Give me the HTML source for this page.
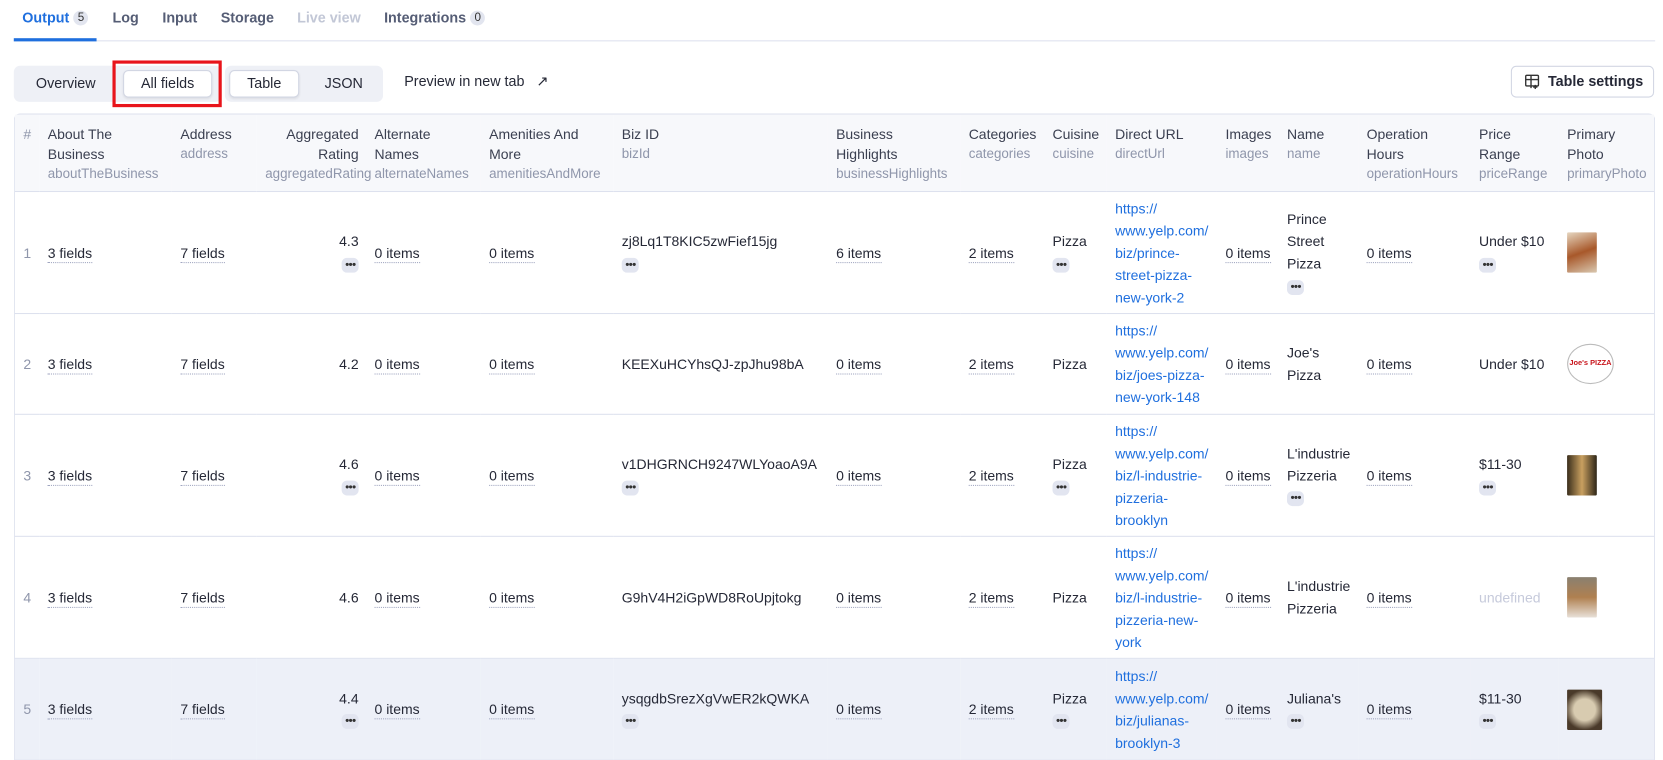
<!DOCTYPE html>
<html><head><meta charset="utf-8"><style>
*{box-sizing:border-box;margin:0;padding:0}
html,body{width:1663px;height:760px;overflow:hidden;background:#fff}
body{font-family:"Liberation Sans",Arial,sans-serif;font-size:13.2px;color:#252836;position:relative}
#w{position:absolute;left:0;top:0;width:1563px;height:715px;transform:scale(1.061);transform-origin:0 0}
.tabs{position:absolute;left:13px;top:0;width:1547px;height:39px;border-bottom:1px solid #dde1ee}
.tab{position:absolute;top:9px;font-size:13.5px;font-weight:bold;color:#555d75}
.badge{display:inline-block;background:#e2e5ef;border-radius:8px;font-size:11px;font-weight:normal;padding:1px 4px;margin-left:4px;color:#333;vertical-align:1px}
.seg{position:absolute;top:62px;height:34px;background:#eef0f6;border-radius:6px}
.btn{position:absolute;top:4px;height:26px;line-height:26px;text-align:center;font-size:13.5px;color:#252836}
.btn.on{background:#fff;border:1px solid #d2d6e3;border-radius:5px;line-height:24px;box-shadow:0 1px 2px rgba(0,0,0,.08)}
table{position:absolute;left:13px;top:107px;width:1547px;border-collapse:separate;border-spacing:0;table-layout:fixed;border:1px solid #dde1ee;border-radius:6px 6px 0 0;border-bottom:none}
th{background:#f7f8fb;text-align:left;vertical-align:top;font-weight:normal;padding:9px 8px 0;line-height:19px;height:73px;border-bottom:1px solid #dde1ee;color:#3a3f50;white-space:nowrap}
th small{display:block;font-size:12.6px;color:#8f96ab}
td{vertical-align:middle;padding:0 8px;line-height:21px;border-bottom:1px solid #dde1ee;white-space:nowrap}
.u{border-bottom:1px dotted #a0a6c0;padding-bottom:1px}
.n{color:#8f96ab;padding-left:8px}
.r{text-align:right;padding-right:7px}
.d{display:inline-block;width:16px;height:14px;border-radius:5px;background:#e2e5f0;font-size:7px;line-height:14px;text-align:center;color:#333;vertical-align:middle;letter-spacing:-1px}
a{color:#1f6fde;text-decoration:none}
.img{width:28px;height:38px;border-radius:1px}
tr.h td{background:#edf0f8}
</style></head><body><div id="w">
<div class="tabs">
<div class="tab" style="left:8px;color:#1f6fde">Output<span class="badge">5</span></div>
<div style="position:absolute;left:0;top:36px;width:78px;height:3px;background:#1f6fde"></div>
<div class="tab" style="left:93px">Log</div>
<div class="tab" style="left:140px">Input</div>
<div class="tab" style="left:195px">Storage</div>
<div class="tab" style="left:267px;color:#c2c7d6">Live view</div>
<div class="tab" style="left:349px">Integrations<span class="badge">0</span></div>
</div>
<div class="seg" style="left:13px;width:196px">
<div class="btn" style="left:8px;width:82px">Overview</div>
<div class="btn on" style="left:103px;width:84px">All fields</div>
</div>
<div style="position:absolute;left:106px;top:57px;width:103px;height:44px;border:3px solid #e8141b"></div>
<div class="seg" style="left:212px;width:149px">
<div class="btn on" style="left:4px;width:66px">Table</div>
<div class="btn" style="left:84px;width:56px">JSON</div>
</div>
<div style="position:absolute;left:381px;top:69px;font-size:13.5px">Preview in new tab&nbsp;&nbsp;&nbsp;↗</div>
<div style="position:absolute;left:1424px;top:62px;width:135px;height:30px;border:1px solid #d2d6e3;border-radius:5px;background:#fff;font-weight:bold;font-size:13.5px;line-height:28px;padding-left:34px">
<svg style="position:absolute;left:12px;top:7px" width="14" height="14" viewBox="0 0 14 14" fill="none" stroke="#333" stroke-width="1.3"><rect x="1" y="1" width="12" height="10" rx="1"/><path d="M1 5h12M6 1v12M10 10v4M8 12h4"/></svg>Table settings</div>
<table>
<colgroup><col style="width:23px"><col style="width:125px"><col style="width:80px"><col style="width:103px"><col style="width:108px"><col style="width:125px"><col style="width:202px"><col style="width:125px"><col style="width:79px"><col style="width:59px"><col style="width:104px"><col style="width:58px"><col style="width:75px"><col style="width:106px"><col style="width:83px"><col style="width:90px"></colgroup>
<tr><th style="padding-left:8px;color:#8f96ab">#</th><th>About The<br>Business<small>aboutTheBusiness</small></th><th>Address<small>address</small></th><th class="r">Aggregated<br>Rating<small>aggregatedRating</small></th><th>Alternate<br>Names<small>alternateNames</small></th><th>Amenities And<br>More<small>amenitiesAndMore</small></th><th>Biz ID<small>bizId</small></th><th>Business<br>Highlights<small>businessHighlights</small></th><th>Categories<small>categories</small></th><th>Cuisine<small>cuisine</small></th><th>Direct URL<small>directUrl</small></th><th>Images<small>images</small></th><th>Name<small>name</small></th><th>Operation<br>Hours<small>operationHours</small></th><th>Price<br>Range<small>priceRange</small></th><th>Primary<br>Photo<small>primaryPhoto</small></th></tr>
<tr style="height:115px"><td class="n">1</td><td><span class="u">3 fields</span></td><td><span class="u">7 fields</span></td><td class="r">4.3<br><span class="d">●●●</span></td><td><span class="u">0 items</span></td><td><span class="u">0 items</span></td><td>zj8Lq1T8KIC5zwFief15jg<br><span class="d">●●●</span></td><td><span class="u">6 items</span></td><td><span class="u">2 items</span></td><td>Pizza<br><span class="d">●●●</span></td><td><a>https://<br>www.yelp.com/<br>biz/prince-<br>street-pizza-<br>new-york-2</a></td><td><span class="u">0 items</span></td><td>Prince<br>Street<br>Pizza<br><span class="d">●●●</span></td><td><span class="u">0 items</span></td><td>Under $10<br><span class="d">●●●</span></td><td><div class="img" style="background:linear-gradient(160deg,#e6d6c0,#a8582a 50%,#d9c8b0)"></div></td></tr>
<tr style="height:95px"><td class="n">2</td><td><span class="u">3 fields</span></td><td><span class="u">7 fields</span></td><td class="r">4.2</td><td><span class="u">0 items</span></td><td><span class="u">0 items</span></td><td>KEEXuHCYhsQJ-zpJhu98bA</td><td><span class="u">0 items</span></td><td><span class="u">2 items</span></td><td>Pizza</td><td><a>https://<br>www.yelp.com/<br>biz/joes-pizza-<br>new-york-148</a></td><td><span class="u">0 items</span></td><td>Joe's<br>Pizza</td><td><span class="u">0 items</span></td><td>Under $10</td><td><div style="width:44px;height:38px;border:1px solid #bbb;border-radius:50%;font-size:7px;font-weight:bold;color:#c8141b;text-align:center;line-height:36px;white-space:nowrap;overflow:hidden">Joe's PIZZA</div></td></tr>
<tr style="height:115px"><td class="n">3</td><td><span class="u">3 fields</span></td><td><span class="u">7 fields</span></td><td class="r">4.6<br><span class="d">●●●</span></td><td><span class="u">0 items</span></td><td><span class="u">0 items</span></td><td>v1DHGRNCH9247WLYoaoA9A<br><span class="d">●●●</span></td><td><span class="u">0 items</span></td><td><span class="u">2 items</span></td><td>Pizza<br><span class="d">●●●</span></td><td><a>https://<br>www.yelp.com/<br>biz/l-industrie-<br>pizzeria-<br>brooklyn</a></td><td><span class="u">0 items</span></td><td>L'industrie<br>Pizzeria<br><span class="d">●●●</span></td><td><span class="u">0 items</span></td><td>$11-30<br><span class="d">●●●</span></td><td><div class="img" style="background:linear-gradient(90deg,#3a2e1c,#c9a060 50%,#2e2618)"></div></td></tr>
<tr style="height:115px"><td class="n">4</td><td><span class="u">3 fields</span></td><td><span class="u">7 fields</span></td><td class="r">4.6</td><td><span class="u">0 items</span></td><td><span class="u">0 items</span></td><td>G9hV4H2iGpWD8RoUpjtokg</td><td><span class="u">0 items</span></td><td><span class="u">2 items</span></td><td>Pizza</td><td><a>https://<br>www.yelp.com/<br>biz/l-industrie-<br>pizzeria-new-<br>york</a></td><td><span class="u">0 items</span></td><td>L'industrie<br>Pizzeria</td><td><span class="u">0 items</span></td><td style="color:#c6cadb">undefined</td><td><div class="img" style="background:linear-gradient(180deg,#8a8070,#b08050 50%,#e8e0d8)"></div></td></tr>
<tr class="h" style="height:96px"><td class="n">5</td><td><span class="u">3 fields</span></td><td><span class="u">7 fields</span></td><td class="r">4.4<br><span class="d">●●●</span></td><td><span class="u">0 items</span></td><td><span class="u">0 items</span></td><td>ysqgdbSrezXgVwER2kQWKA<br><span class="d">●●●</span></td><td><span class="u">0 items</span></td><td><span class="u">2 items</span></td><td>Pizza<br><span class="d">●●●</span></td><td><a>https://<br>www.yelp.com/<br>biz/julianas-<br>brooklyn-3</a></td><td><span class="u">0 items</span></td><td>Juliana's<br><span class="d">●●●</span></td><td><span class="u">0 items</span></td><td>$11-30<br><span class="d">●●●</span></td><td><div class="img" style="width:33px;background:radial-gradient(circle,#d8cbb0 40%,#4a3a2a 75%)"></div></td></tr>
</table>
</div></body></html>
